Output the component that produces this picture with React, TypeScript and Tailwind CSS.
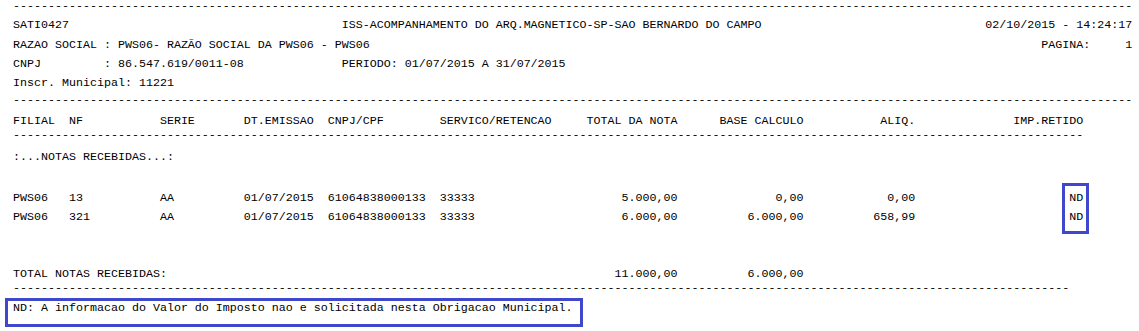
import React from "react";

type Seg = [number, string, ("l" | "r")?];

function cols(segs: Seg[]): string {
  let s = "";
  for (const [c, t, a] of segs) {
    const start = a === "r" ? c - t.length : c;
    if (s.length < start) s = s.padEnd(start, " ");
    s = s.slice(0, start) + t + s.slice(start + t.length);
  }
  return s;
}

const dash = (n: number) => "-".repeat(n);

function Row({ text, className = "" }: { text: string; className?: string }) {
  return <div className={`h-[12px] leading-[12px] whitespace-pre pl-[8px] ${className}`}>{text}</div>;
}

export default function App() {
  return (
    <div className="relative w-[1139px] h-[331px] overflow-hidden bg-white text-black font-['Liberation_Mono','Courier_New',monospace] text-[11.667px] pl-[5px]">
      <Row text={dash(160)} />
      <Row
        className="mt-[7px]"
        text={cols([
          [0, "SATI0427"],
          [47, "ISS-ACOMPANHAMENTO DO ARQ.MAGNETICO-SP-SAO BERNARDO DO CAMPO"],
          [139, "02/10/2015 - 14:24:17"],
        ])}
      />
      <Row
        className="mt-[8px]"
        text={cols([
          [0, "RAZAO SOCIAL : PWS06- RAZÃO SOCIAL DA PWS06 - PWS06"],
          [147, "PAGINA:"],
          [159, "1"],
        ])}
      />
      <Row
        className="mt-[7px]"
        text={cols([
          [0, "CNPJ"],
          [13, ": 86.547.619/0011-08"],
          [47, "PERIODO: 01/07/2015 A 31/07/2015"],
        ])}
      />
      <Row className="mt-[7px]" text="Inscr. Municipal: 11221" />
      <Row className="mt-[5px]" text={dash(160)} />
      <Row
        className="mt-[9px]"
        text={cols([
          [0, "FILIAL"],
          [8, "NF"],
          [21, "SERIE"],
          [33, "DT.EMISSAO"],
          [45, "CNPJ/CPF"],
          [61, "SERVICO/RETENCAO"],
          [82, "TOTAL DA NOTA"],
          [101, "BASE CALCULO"],
          [124, "ALIQ."],
          [143, "IMP.RETIDO"],
        ])}
      />
      <Row className="mt-[2px]" text={dash(153)} />
      <Row className="mt-[10px]" text=":...NOTAS RECEBIDAS...:" />
      <Row
        className="mt-[29px]"
        text={cols([
          [0, "PWS06"],
          [8, "13"],
          [21, "AA"],
          [33, "01/07/2015"],
          [45, "61064838000133"],
          [61, "33333"],
          [95, "5.000,00", "r"],
          [113, "0,00", "r"],
          [129, "0,00", "r"],
          [151, "ND"],
        ])}
      />
      <Row
        className="mt-[7px]"
        text={cols([
          [0, "PWS06"],
          [8, "321"],
          [21, "AA"],
          [33, "01/07/2015"],
          [45, "61064838000133"],
          [61, "33333"],
          [95, "6.000,00", "r"],
          [113, "6.000,00", "r"],
          [129, "658,99", "r"],
          [151, "ND"],
        ])}
      />
      <Row
        className="mt-[45px]"
        text={cols([
          [0, "TOTAL NOTAS RECEBIDAS:"],
          [95, "11.000,00", "r"],
          [113, "6.000,00", "r"],
        ])}
      />
      <Row className="mt-[2px]" text={dash(151)} />
      <div className="mt-[4px] w-[578px] h-[29px] border-[3px] border-[#3F48CC] pl-[5px] pt-[1px]">
        <div className="h-[12px] leading-[12px] whitespace-pre">
          ND: A informacao do Valor do Imposto nao e solicitada nesta Obrigacao Municipal.
        </div>
      </div>
      <div className="absolute left-[1062px] top-[183px] w-[27px] h-[51px] border-[3px] border-[#3F48CC]" />
    </div>
  );
}
